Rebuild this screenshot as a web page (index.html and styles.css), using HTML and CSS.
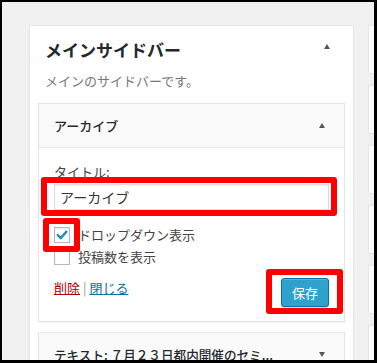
FILE: index.html
```html
<!DOCTYPE html>
<html lang="ja">
<head>
<meta charset="utf-8">
<title>メインサイドバー</title>
<link rel="stylesheet" href="styles.css">
</head>
<body>
<div class="frame">
  <div class="sidebar">
    <div class="sidebar-head">
      <h2 class="sidebar-title">メインサイドバー</h2>
      <span class="tri tri-up"></span>
    </div>
    <p class="sidebar-desc">メインのサイドバーです。</p>

    <div class="widget">
      <div class="widget-top">
        <span class="widget-name">アーカイブ</span>
        <span class="tri tri-up"></span>
      </div>
      <div class="widget-inside">
        <label class="field-label">タイトル:</label>
        <input class="text-input" type="text" value="アーカイブ">
        <div class="check-row">
          <span class="checkbox checked">
            <svg viewBox="0 0 16 16" width="16" height="16"><path d="M3.2 8.2 L6.6 11.6 L12.9 4.2" fill="none" stroke="#1e8cbe" stroke-width="2.8" stroke-linecap="round" stroke-linejoin="round"/></svg>
          </span>
          <span class="check-label">ドロップダウン表示</span>
        </div>
        <div class="check-row second">
          <span class="checkbox"></span>
          <span class="check-label">投稿数を表示</span>
        </div>
        <div class="actions">
          <div class="links"><a class="link-delete" href="#">削除</a> <span class="sep">|</span> <a class="link-close" href="#">閉じる</a></div>
          <button class="btn-primary" type="button">保存</button>
        </div>
      </div>
    </div>

    <div class="widget next">
      <div class="widget-top">
        <span class="widget-name">テキスト: ７月２３日都内開催のセミ...</span>
        <span class="tri tri-down"></span>
      </div>
    </div>
  </div>

  <div class="side-col">
    <div class="side-box"></div>
    <div class="side-box"></div>
    <div class="side-box"></div>
    <div class="side-box"></div>
    <div class="side-box"></div>
    <div class="side-box"></div>
  </div>

  <div class="mark mark-input"></div>
  <div class="mark mark-check"></div>
  <div class="mark mark-save"></div>
</div>
</body>
</html>
```
FILE: styles.css
```css
* { box-sizing: border-box; }
html, body { margin: 0; padding: 0; background: #000; }
body { font-family: "Noto Sans CJK JP", "Noto Sans", sans-serif; }

.frame {
  position: relative;
  width: 377px;
  height: 363px;
  border-style: solid;
  border-color: #000;
  border-width: 2px 3px 3px 2px;
  background: #f1f1f1;
  overflow: hidden;
  display: flex;
  align-items: flex-start;
  gap: 14px;
  padding: 23px 0 0 27px;
}

.sidebar {
  flex: 0 0 325px;
  width: 325px;
  background: #fff;
  border: 1px solid #e5e5e5;
  box-shadow: 0 1px 1px rgba(0,0,0,.04);
  padding: 0 8px 20px;
}

.sidebar-head {
  display: flex;
  justify-content: space-between;
  align-items: flex-start;
  padding: 12px 15px 0 7px;
}
.sidebar-title {
  margin: 0;
  font-size: 17px;
  line-height: 24px;
  font-weight: 700;
  color: #23282d;
}
.sidebar-desc {
  margin: 9px 0 0 7px;
  font-size: 13px;
  line-height: 20px;
  color: #777;
}

.tri {
  width: 0;
  height: 0;
  border-left: 3.5px solid transparent;
  border-right: 3.5px solid transparent;
}
.tri-up { border-bottom: 5px solid #555; }
.tri-down { border-top: 5px solid #555; }
.sidebar-head .tri { margin-top: 6px; }

.widget {
  margin-top: 12px;
  background: #fff;
  border: 1px solid #e5e5e5;
  box-shadow: 0 1px 1px rgba(0,0,0,.04);
}
.widget.next { margin-top: 10px; }

.widget-top {
  height: 44px;
  background: #fafafa;
  border-bottom: 1px solid #e5e5e5;
  display: flex;
  align-items: center;
  justify-content: space-between;
  padding: 0 19px 1px 15px;
}
.widget-name {
  font-size: 13px;
  font-weight: 500;
  color: #23282d;
  white-space: nowrap;
}
.widget.next .widget-name { font-size: 12.6px; }

.widget-inside {
  padding: 15px 15px 14px;
}
.field-label {
  display: block;
  font-size: 13px;
  line-height: 18px;
  color: #444;
}
.text-input {
  display: block;
  width: 100%;
  height: 26px;
  margin-top: 3px;
  padding: 0 5px;
  border: 1px solid #ddd;
  box-shadow: inset 0 1px 2px rgba(0,0,0,.07);
  font-family: "Noto Sans CJK JP", sans-serif;
  font-size: 14px;
  color: #333;
  background: #fff;
}

.check-row {
  display: flex;
  align-items: center;
  gap: 8px;
  height: 16px;
  margin-top: 17px;
}
.check-row.second { margin-top: 6px; }
.checkbox {
  width: 16px;
  height: 16px;
  border: 1px solid #b4b9be;
  background: #fff;
  box-shadow: inset 0 1px 2px rgba(0,0,0,.1);
  display: flex;
  align-items: center;
  justify-content: center;
}
.checkbox svg { display: block; }
.check-label {
  font-size: 13px;
  line-height: 18px;
  color: #444;
}

.actions {
  margin-top: 13px;
  display: flex;
  justify-content: space-between;
  align-items: flex-start;
}
.links {
  font-size: 13px;
  line-height: 20px;
}
.link-delete { color: #a00; text-decoration: underline; }
.link-close { color: #0074a2; text-decoration: underline; }
.sep { color: #999; }

.btn-primary {
  height: 29px;
  padding: 0 10px;
  border: 1px solid #0074a2;
  border-radius: 3px;
  background: #2ea2cc;
  box-shadow: inset 0 1px 0 rgba(120,200,230,.5), 0 1px 0 rgba(0,0,0,.15);
  color: #fff;
  font-family: "Noto Sans CJK JP", sans-serif;
  font-size: 13px;
  line-height: 27px;
}

.side-col {
  display: flex;
  flex-direction: column;
  gap: 11px;
}
.side-box {
  width: 30px;
  height: 49px;
  background: #fff;
  border: 1px solid #e5e5e5;
}

.mark {
  position: absolute;
  border: 6px solid #f00;
  border-radius: 3px;
}
.mark-input { left: 39px; top: 175px; width: 296px; height: 39px; }
.mark-check { left: 41px; top: 216px; width: 37px; height: 34px; }
.mark-save { left: 264px; top: 267px; width: 77px; height: 45px; }
```
